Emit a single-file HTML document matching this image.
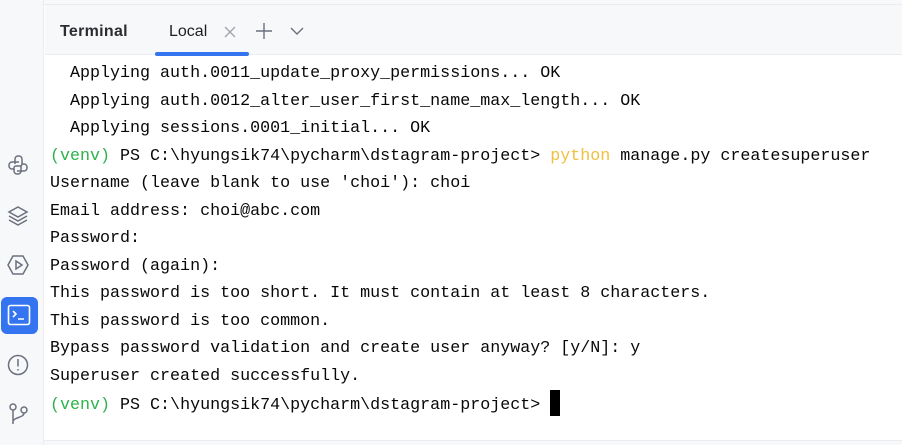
<!DOCTYPE html>
<html><head><meta charset="utf-8"><style>
*{margin:0;padding:0;box-sizing:border-box}
body{width:902px;height:445px;background:#fff;position:relative;overflow:hidden;font-family:"Liberation Sans",sans-serif}
.side{position:absolute;left:0;top:0;width:44px;height:445px;background:#f7f8fa;border-right:1px solid #ebecf0}
.top{position:absolute;left:44px;top:0;width:858px;height:5px;background:#f7f8fa;border-bottom:1px solid #ebecf0}
.hdr{position:absolute;left:45px;top:5px;width:857px;height:50px;background:#f7f8fa;border-bottom:1px solid #ebecf0}
.bot{position:absolute;left:44px;top:440px;width:858px;height:5px;background:#f7f8fa;border-top:1px solid #ebecf0}
.t{position:absolute;font-size:16px;color:#1e1f22}
.ul{position:absolute;left:155px;top:52px;width:94px;height:4px;background:#3574f0;border-radius:2px}
.term{position:absolute;left:50px;top:60px;font-family:"Liberation Mono",monospace;font-size:16.68px;line-height:27.5px;color:#080808;white-space:pre}
.g{color:#2db34a}.y{color:#f0c040}
.cur{display:inline-block;width:10px;height:26px;background:#000;vertical-align:-7px}
svg{position:absolute}
</style></head><body>
<div class="side"></div><div class="top"></div><div class="hdr"></div><div class="bot"></div>
<div class="t" style="left:60px;top:23px;font-weight:bold;font-size:16px;letter-spacing:0.3px;color:#2b2d30">Terminal</div>
<div class="t" style="left:169px;top:23px">Local</div>
<div class="ul"></div>
<svg style="left:224px;top:26px" width="12" height="12"><path d="M1 1L11 11M11 1L1 11" stroke="#a0a3aa" stroke-width="1.3"/></svg>
<svg style="left:255px;top:22px" width="18" height="18"><path d="M9 1V17M1 9H17" stroke="#6c707e" stroke-width="1.4"/></svg>
<svg style="left:290px;top:26px" width="14" height="10"><path d="M1 2L7 8L13 2" stroke="#6c707e" stroke-width="1.4" fill="none"/></svg>
<svg style="left:7px;top:154px" width="22" height="22" fill="none" stroke="#6c707e" stroke-width="1.5"><path d="M8 10V5a3 3 0 0 1 3-3h1a3 3 0 0 1 3 3v5a2 2 0 0 1-2 2H9a2 2 0 0 0-2 2v1H5a3 3 0 0 1-3-3v-1a3 3 0 0 1 3-3h7"/><path d="M14 12v5a3 3 0 0 1-3 3h-1a3 3 0 0 1-3-3v-2M15 10h2a3 3 0 0 1 3 3v1a3 3 0 0 1-3 3h-7"/></svg>
<svg style="left:7px;top:204px" width="22" height="22" fill="none" stroke="#6c707e" stroke-width="1.5"><path d="M11 3L20 8L11 13L2 8Z"/><path d="M2 12L11 17L20 12"/><path d="M2 16L11 21L20 16"/></svg>
<svg style="left:6px;top:253px" width="24" height="24" fill="none" stroke="#6c707e" stroke-width="1.5"><path d="M7 3H17L22 12L17 21H7L2 12Z"/><path d="M10 8L16 12L10 16Z"/></svg>
<div style="position:absolute;left:1px;top:297px;width:37px;height:37px;background:#3574f0;border-radius:6px"></div>
<svg style="left:7px;top:304px" width="24" height="22" fill="none" stroke="#fff" stroke-width="1.6"><rect x="1.5" y="1.5" width="21" height="19" rx="2"/><path d="M6 7L9 10L6 13M11 15H17"/></svg>
<svg style="left:7px;top:354px" width="22" height="22" fill="none" stroke="#6c707e" stroke-width="1.5"><circle cx="11" cy="11" r="9.5"/><path d="M11 5V12.5M11 15V16.5"/></svg>
<svg style="left:8px;top:402px" width="22" height="24" fill="none" stroke="#6c707e" stroke-width="1.5"><circle cx="5" cy="5" r="3"/><circle cx="16" cy="8" r="3"/><path d="M5 8V22M16 11c0 5-11 4-11 9"/></svg>
<div class="term">  Applying auth.0011_update_proxy_permissions... OK
  Applying auth.0012_alter_user_first_name_max_length... OK
  Applying sessions.0001_initial... OK
<span class="g">(venv)</span> PS C:\hyungsik74\pycharm\dstagram-project&gt; <span class="y">python</span> manage.py createsuperuser
Username (leave blank to use 'choi'): choi
Email address: choi@abc.com
Password:
Password (again):
This password is too short. It must contain at least 8 characters.
This password is too common.
Bypass password validation and create user anyway? [y/N]: y
Superuser created successfully.
<span class="g">(venv)</span> PS C:\hyungsik74\pycharm\dstagram-project&gt; <span class="cur"></span></div>
</body></html>
